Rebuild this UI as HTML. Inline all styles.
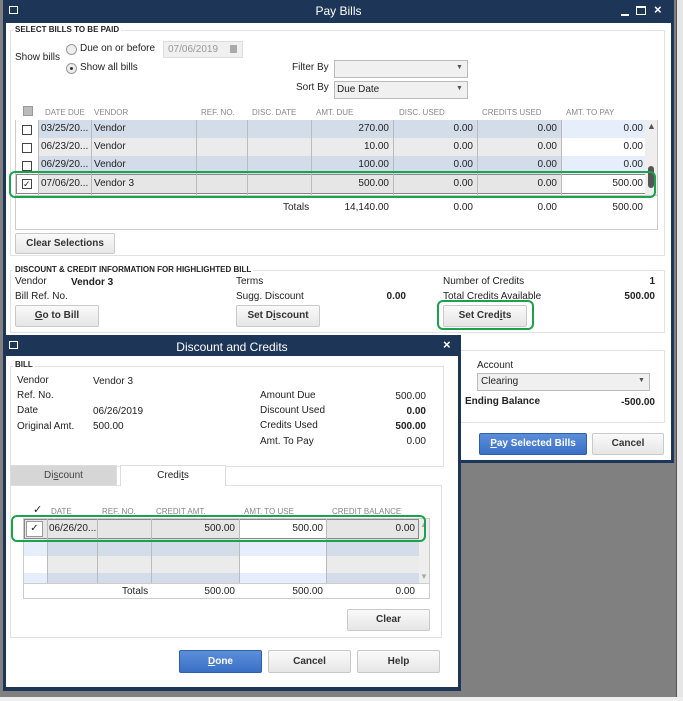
<!DOCTYPE html>
<html><head><meta charset="utf-8"><style>
*{box-sizing:border-box;margin:0;padding:0}
body{width:683px;height:701px;overflow:hidden;background:#808080;font-family:"Liberation Sans",sans-serif;font-size:10px;color:#222;position:relative}
.a{position:absolute}
.win{position:absolute;background:#1d3557;}
.body{position:absolute;background:#fff}
.title{position:absolute;color:#fff;font-size:12px;text-align:center}
.grp{position:absolute;border:1px solid #e2e2e2}
.lbl{position:absolute;font-size:8px;color:#222;background:#fff;padding:0 2px}
.btn{position:absolute;border:1px solid #c9c9c9;border-radius:2px;background:linear-gradient(#fafafa,#e6e6e6);font-weight:bold;font-size:10px;color:#333;text-align:center}
.bbtn{position:absolute;border:1px solid #2f5fa8;border-radius:2px;background:linear-gradient(#5b8fdb,#3b6fc6);color:#fff;font-weight:bold;font-size:10px;text-align:center}
.hd{position:absolute;font-size:8px;color:#888}
.r{text-align:right}
.cb{position:absolute;width:10px;height:10px;border:1px solid #444;background:#fff}
.green{position:absolute;border:2px solid #1aa34a;border-radius:6px}
.sel{position:absolute;border:1px solid #bbb;background:#f0f0f0}
</style></head><body>
<div class="a" style="left:676px;top:0;width:7px;height:701px;background:#e6e6e6;border-left:1px solid #555"></div>
<div class="a" style="left:0;top:697px;width:683px;height:4px;background:#eee"></div>

<div class="win" style="left:3px;top:0;width:671px;height:463px"></div>
<div class="a" style="left:9px;top:6px;width:9px;height:8px;border:1px solid #fff"></div>
<div class="title" style="left:3px;top:4px;width:671px">Pay Bills</div>
<div class="a" style="left:621px;top:14px;width:8px;height:2px;background:#fff"></div>
<div class="a" style="left:636px;top:6px;width:10px;height:9px;border:1px solid #fff;border-top-width:2px"></div>
<div class="a" style="left:654px;top:2px;color:#fff;font-weight:bold;font-size:13px">×</div>
<div class="body" style="left:6px;top:23px;width:665px;height:437px"></div>

<div class="grp" style="left:10px;top:30px;width:655px;height:226px"></div>
<div class="lbl" style="left:13px;top:25px;font-weight:bold">SELECT BILLS TO BE PAID</div>
<div class="a" style="left:15px;top:52px">Show bills</div>
<div class="a" style="left:66px;top:44px;width:11px;height:11px;border-radius:50%;border:1px solid #999;background:#eee"></div>
<div class="a" style="left:80px;top:43px">Due on or before</div>
<div class="a" style="left:66px;top:63px;width:11px;height:11px;border-radius:50%;border:1px solid #999;background:#eee"><div class="a" style="left:3px;top:3px;width:3px;height:3px;background:#333;border-radius:50%"></div></div>
<div class="a" style="left:80px;top:62px">Show all bills</div>
<div class="a" style="left:163px;top:41px;width:80px;height:17px;background:#f0f0f0;border:1px solid #ddd;color:#999;padding:2px 4px">07/06/2019</div>
<div class="a" style="left:230px;top:45px;width:7px;height:8px;background:#aaa"></div>
<div class="a" style="left:292px;top:62px">Filter By</div>
<div class="sel" style="left:334px;top:60px;width:134px;height:18px"></div>
<div class="a" style="left:456px;top:64px;font-size:7px;color:#555">▼</div>
<div class="a" style="left:296px;top:82px">Sort By</div>
<div class="sel" style="left:334px;top:81px;width:134px;height:18px;padding:2px 2px">Due Date</div>
<div class="a" style="left:456px;top:85px;font-size:7px;color:#555">▼</div>

<div class="a" style="left:23px;top:106px;width:10px;height:10px;background:#bbb;border:1px solid #999"></div>
<div class="hd" style="left:45px;top:108px">DATE DUE</div>
<div class="hd" style="left:94px;top:108px">VENDOR</div>
<div class="hd" style="left:201px;top:108px">REF. NO.</div>
<div class="hd" style="left:252px;top:108px">DISC. DATE</div>
<div class="hd" style="left:316px;top:108px">AMT. DUE</div>
<div class="hd" style="left:399px;top:108px">DISC. USED</div>
<div class="hd" style="left:482px;top:108px">CREDITS USED</div>
<div class="hd" style="left:566px;top:108px">AMT. TO PAY</div>

<div class="a" style="left:15px;top:120px;width:643px;height:110px;border:1px solid #ccc;background:#fff"></div>
<div class="a" style="left:16px;top:120px;width:629px;height:18px;background:#d3dce9"></div>
<div class="a" style="left:16px;top:138px;width:629px;height:18px;background:#ebebeb"></div>
<div class="a" style="left:16px;top:156px;width:629px;height:18px;background:#d3dce9"></div>
<div class="a" style="left:16px;top:174px;width:629px;height:20px;background:#e6e6e6;border:1px solid #888"></div>
<div class="a" style="left:561px;top:120px;width:84px;height:18px;background:#e6eefb"></div>
<div class="a" style="left:561px;top:138px;width:84px;height:18px;background:#fff"></div>
<div class="a" style="left:561px;top:156px;width:84px;height:18px;background:#e6eefb"></div>
<div class="a" style="left:561px;top:175px;width:84px;height:18px;background:#fff"></div>
<div class="a" style="left:645px;top:120px;width:12px;height:75px;background:#eee"></div>
<div class="a" style="left:647px;top:121px;font-size:9px;color:#555">▲</div>
<div class="a" style="left:648px;top:166px;width:6px;height:22px;background:#555;border-radius:3px"></div>
<div class="a" style="left:16px;top:120px;width:22px;height:75px;background:#fff"></div>
<div class="a" style="left:16px;top:174px;width:22px;height:20px;border:1px solid #888;border-right:0;background:#fff"></div>
<div class="a" style="left:38px;top:120px;width:1px;height:75px;background:#bbb"></div>
<div class="a" style="left:91px;top:120px;width:1px;height:75px;background:#bbb"></div>
<div class="a" style="left:196px;top:120px;width:1px;height:75px;background:#bbb"></div>
<div class="a" style="left:247px;top:120px;width:1px;height:75px;background:#bbb"></div>
<div class="a" style="left:311px;top:120px;width:1px;height:75px;background:#bbb"></div>
<div class="a" style="left:393px;top:120px;width:1px;height:75px;background:#bbb"></div>
<div class="a" style="left:477px;top:120px;width:1px;height:75px;background:#bbb"></div>
<div class="a" style="left:561px;top:120px;width:1px;height:75px;background:#bbb"></div>
<div class="a" style="left:15px;top:195px;width:643px;height:1px;background:#ccc"></div>
<div class="cb" style="left:22px;top:125px"></div>
<div class="cb" style="left:22px;top:143px"></div>
<div class="cb" style="left:22px;top:161px"></div>
<div class="cb" style="left:22px;top:179px;font-size:9px;line-height:8px">✓</div>

<div class="a" style="left:41px;top:123px">03/25/20...</div><div class="a" style="left:94px;top:123px">Vendor</div>
<div class="a r" style="left:311px;top:123px;width:78px">270.00</div><div class="a r" style="left:393px;top:123px;width:80px">0.00</div><div class="a r" style="left:477px;top:123px;width:80px">0.00</div><div class="a r" style="left:561px;top:123px;width:82px">0.00</div>
<div class="a" style="left:41px;top:141px">06/23/20...</div><div class="a" style="left:94px;top:141px">Vendor</div>
<div class="a r" style="left:311px;top:141px;width:78px">10.00</div><div class="a r" style="left:393px;top:141px;width:80px">0.00</div><div class="a r" style="left:477px;top:141px;width:80px">0.00</div><div class="a r" style="left:561px;top:141px;width:82px">0.00</div>
<div class="a" style="left:41px;top:159px">06/29/20...</div><div class="a" style="left:94px;top:159px">Vendor</div>
<div class="a r" style="left:311px;top:159px;width:78px">100.00</div><div class="a r" style="left:393px;top:159px;width:80px">0.00</div><div class="a r" style="left:477px;top:159px;width:80px">0.00</div><div class="a r" style="left:561px;top:159px;width:82px">0.00</div>
<div class="a" style="left:41px;top:178px">07/06/20...</div><div class="a" style="left:94px;top:178px">Vendor 3</div>
<div class="a r" style="left:311px;top:178px;width:78px">500.00</div><div class="a r" style="left:393px;top:178px;width:80px">0.00</div><div class="a r" style="left:477px;top:178px;width:80px">0.00</div><div class="a r" style="left:561px;top:178px;width:82px">500.00</div>
<div class="green" style="left:9px;top:171px;width:647px;height:27px"></div>
<div class="a" style="left:283px;top:202px">Totals</div>
<div class="a r" style="left:311px;top:202px;width:78px">14,140.00</div><div class="a r" style="left:393px;top:202px;width:80px">0.00</div><div class="a r" style="left:477px;top:202px;width:80px">0.00</div><div class="a r" style="left:561px;top:202px;width:82px">500.00</div>

<div class="btn" style="left:15px;top:233px;width:100px;height:21px;line-height:19px">Clear Selections</div>

<div class="grp" style="left:10px;top:270px;width:655px;height:63px"></div>
<div class="lbl" style="left:13px;top:265px;font-weight:bold">DISCOUNT &amp; CREDIT INFORMATION FOR HIGHLIGHTED BILL</div>
<div class="a" style="left:15px;top:276px">Vendor</div><div class="a" style="left:71px;top:277px;font-weight:bold">Vendor 3</div>
<div class="a" style="left:15px;top:291px">Bill Ref. No.</div>
<div class="a" style="left:236px;top:276px">Terms</div>
<div class="a" style="left:236px;top:291px">Sugg. Discount</div><div class="a r" style="left:350px;top:291px;width:56px;font-weight:bold">0.00</div>
<div class="a" style="left:443px;top:276px">Number of Credits</div><div class="a r" style="left:600px;top:276px;width:55px;font-weight:bold">1</div>
<div class="a" style="left:443px;top:291px">Total Credits Available</div><div class="a r" style="left:600px;top:291px;width:55px;font-weight:bold">500.00</div>
<div class="btn" style="left:15px;top:305px;width:84px;height:22px;line-height:20px"><u>G</u>o to Bill</div>
<div class="btn" style="left:236px;top:305px;width:84px;height:22px;line-height:20px">Set D<u>i</u>scount</div>
<div class="btn" style="left:443px;top:305px;width:84px;height:22px;line-height:20px">Set Cred<u>i</u>ts</div>
<div class="green" style="left:437px;top:300px;width:97px;height:30px"></div>

<div class="grp" style="left:460px;top:350px;width:205px;height:73px"></div>
<div class="a" style="left:477px;top:360px">Account</div>
<div class="sel" style="left:477px;top:373px;width:173px;height:18px;padding:2px 3px">Clearing</div>
<div class="a" style="left:638px;top:377px;font-size:7px;color:#555">▼</div>
<div class="a" style="left:465px;top:396px;font-weight:bold">Ending Balance</div>
<div class="a r" style="left:580px;top:397px;width:75px;font-weight:bold">-500.00</div>
<div class="bbtn" style="left:479px;top:433px;width:108px;height:22px;line-height:20px"><u>P</u>ay Selected Bills</div>
<div class="btn" style="left:592px;top:433px;width:72px;height:22px;line-height:20px">Cancel</div>

<!-- Discount and Credits window -->
<div class="win" style="left:3px;top:335px;width:458px;height:356px"></div>
<div class="a" style="left:9px;top:341px;width:9px;height:8px;border:1px solid #fff"></div>
<div class="title" style="left:3px;top:340px;width:458px">Discount and Credits</div>
<div class="a" style="left:443px;top:337px;color:#fff;font-weight:bold;font-size:13px">×</div>
<div class="body" style="left:6px;top:356px;width:452px;height:331px"></div>

<div class="grp" style="left:10px;top:366px;width:434px;height:101px"></div>
<div class="lbl" style="left:13px;top:360px;font-weight:bold">BILL</div>
<div class="a" style="left:17px;top:375px">Vendor</div><div class="a" style="left:93px;top:376px">Vendor 3</div>
<div class="a" style="left:17px;top:390px">Ref. No.</div>
<div class="a" style="left:17px;top:405px">Date</div><div class="a" style="left:93px;top:406px">06/26/2019</div>
<div class="a" style="left:17px;top:421px">Original Amt.</div><div class="a" style="left:93px;top:421px">500.00</div>
<div class="a" style="left:260px;top:390px">Amount Due</div><div class="a r" style="left:370px;top:391px;width:56px">500.00</div>
<div class="a" style="left:260px;top:405px">Discount Used</div><div class="a r" style="left:370px;top:406px;width:56px;font-weight:bold">0.00</div>
<div class="a" style="left:260px;top:420px">Credits Used</div><div class="a r" style="left:370px;top:421px;width:56px;font-weight:bold">500.00</div>
<div class="a" style="left:260px;top:436px">Amt. To Pay</div><div class="a r" style="left:370px;top:436px;width:56px">0.00</div>

<div class="a" style="left:10px;top:485px;width:432px;height:153px;border:1px solid #e2e2e2"></div>
<div class="a" style="left:10px;top:465px;width:107px;height:21px;background:#d6d6d6;border:1px solid #ddd;text-align:center;line-height:19px;color:#444">Di<u>s</u>count</div>
<div class="a" style="left:120px;top:465px;width:106px;height:21px;background:#fff;border:1px solid #ddd;border-bottom:0;text-align:center;line-height:19px">Credi<u>t</u>s</div>

<div class="a" style="left:33px;top:503px;font-size:11px">✓</div>
<div class="hd" style="left:51px;top:507px">DATE</div>
<div class="hd" style="left:102px;top:507px">REF. NO.</div>
<div class="hd" style="left:156px;top:507px">CREDIT AMT.</div>
<div class="hd" style="left:244px;top:507px">AMT. TO USE</div>
<div class="hd" style="left:332px;top:507px">CREDIT BALANCE</div>

<div class="a" style="left:23px;top:518px;width:407px;height:81px;border:1px solid #ccc;background:#fff"></div>
<div class="a" style="left:24px;top:519px;width:395px;height:20px;background:#e6e6e6;border:1px solid #888"></div>
<div class="a" style="left:239px;top:520px;width:87px;height:18px;background:#fff"></div>
<div class="a" style="left:24px;top:539px;width:395px;height:17px;background:#d3dce9"></div>
<div class="a" style="left:24px;top:556px;width:395px;height:17px;background:#ebebeb"></div>
<div class="a" style="left:24px;top:573px;width:395px;height:10px;background:#d3dce9"></div>
<div class="a" style="left:24px;top:539px;width:23px;height:44px;background:#fff"></div>
<div class="a" style="left:24px;top:539px;width:23px;height:17px;background:#e6eefb"></div>
<div class="a" style="left:24px;top:573px;width:23px;height:10px;background:#e6eefb"></div>
<div class="a" style="left:239px;top:539px;width:87px;height:17px;background:#e6eefb"></div>
<div class="a" style="left:239px;top:556px;width:87px;height:17px;background:#fff"></div>
<div class="a" style="left:239px;top:573px;width:87px;height:10px;background:#e6eefb"></div>
<div class="a" style="left:419px;top:519px;width:10px;height:64px;background:#eee"></div>
<div class="a" style="left:420px;top:520px;font-size:8px;color:#aaa">▲</div>
<div class="a" style="left:420px;top:572px;font-size:8px;color:#aaa">▼</div>
<div class="a" style="left:47px;top:519px;width:1px;height:64px;background:#bbb"></div>
<div class="a" style="left:97px;top:519px;width:1px;height:64px;background:#bbb"></div>
<div class="a" style="left:151px;top:519px;width:1px;height:64px;background:#bbb"></div>
<div class="a" style="left:239px;top:519px;width:1px;height:64px;background:#bbb"></div>
<div class="a" style="left:326px;top:519px;width:1px;height:64px;background:#bbb"></div>
<div class="a" style="left:23px;top:583px;width:407px;height:1px;background:#ccc"></div>
<div class="a" style="left:26px;top:521px;width:17px;height:16px;background:#fff;border:1px solid #999;font-size:10px;text-align:center;line-height:14px">✓</div>
<div class="a" style="left:49px;top:523px">06/26/20...</div>
<div class="a r" style="left:151px;top:523px;width:84px">500.00</div>
<div class="a r" style="left:239px;top:523px;width:84px">500.00</div>
<div class="a r" style="left:326px;top:523px;width:89px">0.00</div>
<div class="green" style="left:11px;top:515px;width:415px;height:27px"></div>
<div class="a" style="left:122px;top:586px">Totals</div>
<div class="a r" style="left:151px;top:586px;width:84px">500.00</div>
<div class="a r" style="left:239px;top:586px;width:84px">500.00</div>
<div class="a r" style="left:326px;top:586px;width:89px">0.00</div>
<div class="btn" style="left:347px;top:609px;width:83px;height:22px;line-height:20px">Clear</div>

<div class="bbtn" style="left:179px;top:650px;width:83px;height:23px;line-height:21px"><u>D</u>one</div>
<div class="btn" style="left:268px;top:650px;width:83px;height:23px;line-height:21px">Cancel</div>
<div class="btn" style="left:357px;top:650px;width:83px;height:23px;line-height:21px">Help</div>
</body></html>
